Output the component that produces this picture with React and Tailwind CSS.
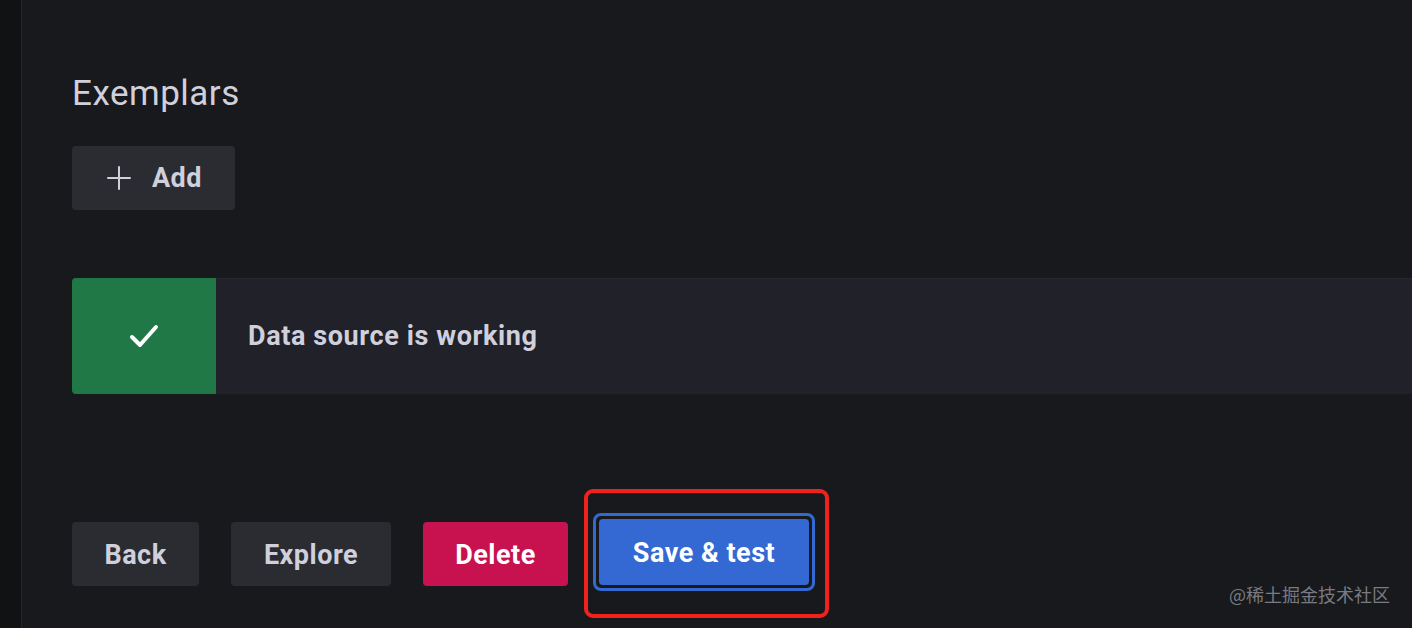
import React from 'react';

const Plus = () => (
    <svg width="24" height="24" viewBox="0 0 24 24" fill="none" stroke="currentColor" strokeWidth="2" strokeLinecap="round">
        <path d="M12 1v22M1 12h22" />
    </svg>
);

const Check = () => (
    <svg width="30" height="26" viewBox="0 0 30 26" fill="none" stroke="currentColor" strokeWidth="4" strokeLinecap="round" strokeLinejoin="round">
        <path d="M3 14l8 8L27 4" />
    </svg>
);

export default function App() {
    return (
        <div className="flex h-[628px] w-[1412px] overflow-hidden bg-[#18191c] font-['Roboto','Liberation_Sans',sans-serif]">
            <div className="w-[22px] shrink-0 border-r border-[#25262a] bg-[#111214]" />
            <div className="relative flex-1 pl-[50px]">
                <h2 className="mt-[72px] text-[35px] leading-[44px] font-normal tracking-[0.5px] text-[#d0d0dc]">Exemplars</h2>
                <button className="mt-[30px] flex h-[64px] w-[163px] items-center rounded-[4px] bg-[#2b2c31] pl-[35px] text-[27px] font-bold tracking-[0.4px] text-[#d0d0dc]">
                    <Plus />
                    <span className="ml-[21px]">Add</span>
                </button>

                <div className="mt-[68px] flex h-[116px] items-stretch rounded-l-[4px] bg-[#212229] shadow-[inset_0_1px_0_#26272c]">
                    <div className="flex w-[144px] items-center justify-center rounded-l-[4px] bg-[#1f7845] text-white">
                        <Check />
                    </div>
                    <div className="flex items-center pl-[32px] text-[27px] font-bold tracking-[0.6px] text-[#d0d0dc]">
                        Data source is working
                    </div>
                </div>

                <div className="mt-[95px] flex items-start gap-[32px]">
                    <button className="mt-[33px] h-[64px] w-[127px] rounded-[4px] bg-[#2b2c31] pt-[2px] text-[27px] font-bold tracking-[0.5px] text-[#d0d0dc]">Back</button>
                    <button className="mt-[33px] h-[64px] w-[160px] rounded-[4px] bg-[#2b2c31] pt-[2px] text-[27px] font-bold tracking-[0.5px] text-[#d0d0dc]">Explore</button>
                    <button className="mt-[33px] h-[64px] w-[145px] rounded-[4px] bg-[#c8114f] pt-[2px] text-[27px] font-bold tracking-[0.5px] text-white">Delete</button>
                    <div className="-ml-[16px] rounded-[9px] border-[4px] border-[#f0231c] pt-[20px] pr-[10px] pb-[23px] pl-[5px]">
                        <div className="rounded-[8px] border-[3px] border-[#3469d4] p-[3px]">
                            <button className="h-[66px] w-[210px] rounded-[4px] bg-[#3469d4] pt-[2px] text-[27px] font-bold tracking-[0.5px] text-white">Save &amp; test</button>
                        </div>
                    </div>
                </div>

                <div className="absolute right-[22px] bottom-[20px] text-[18px] text-[#7a7a80] font-['Noto_Sans_CJK_SC',sans-serif]">
                    @稀土掘金技术社区
                </div>
            </div>
        </div>
    );
}
